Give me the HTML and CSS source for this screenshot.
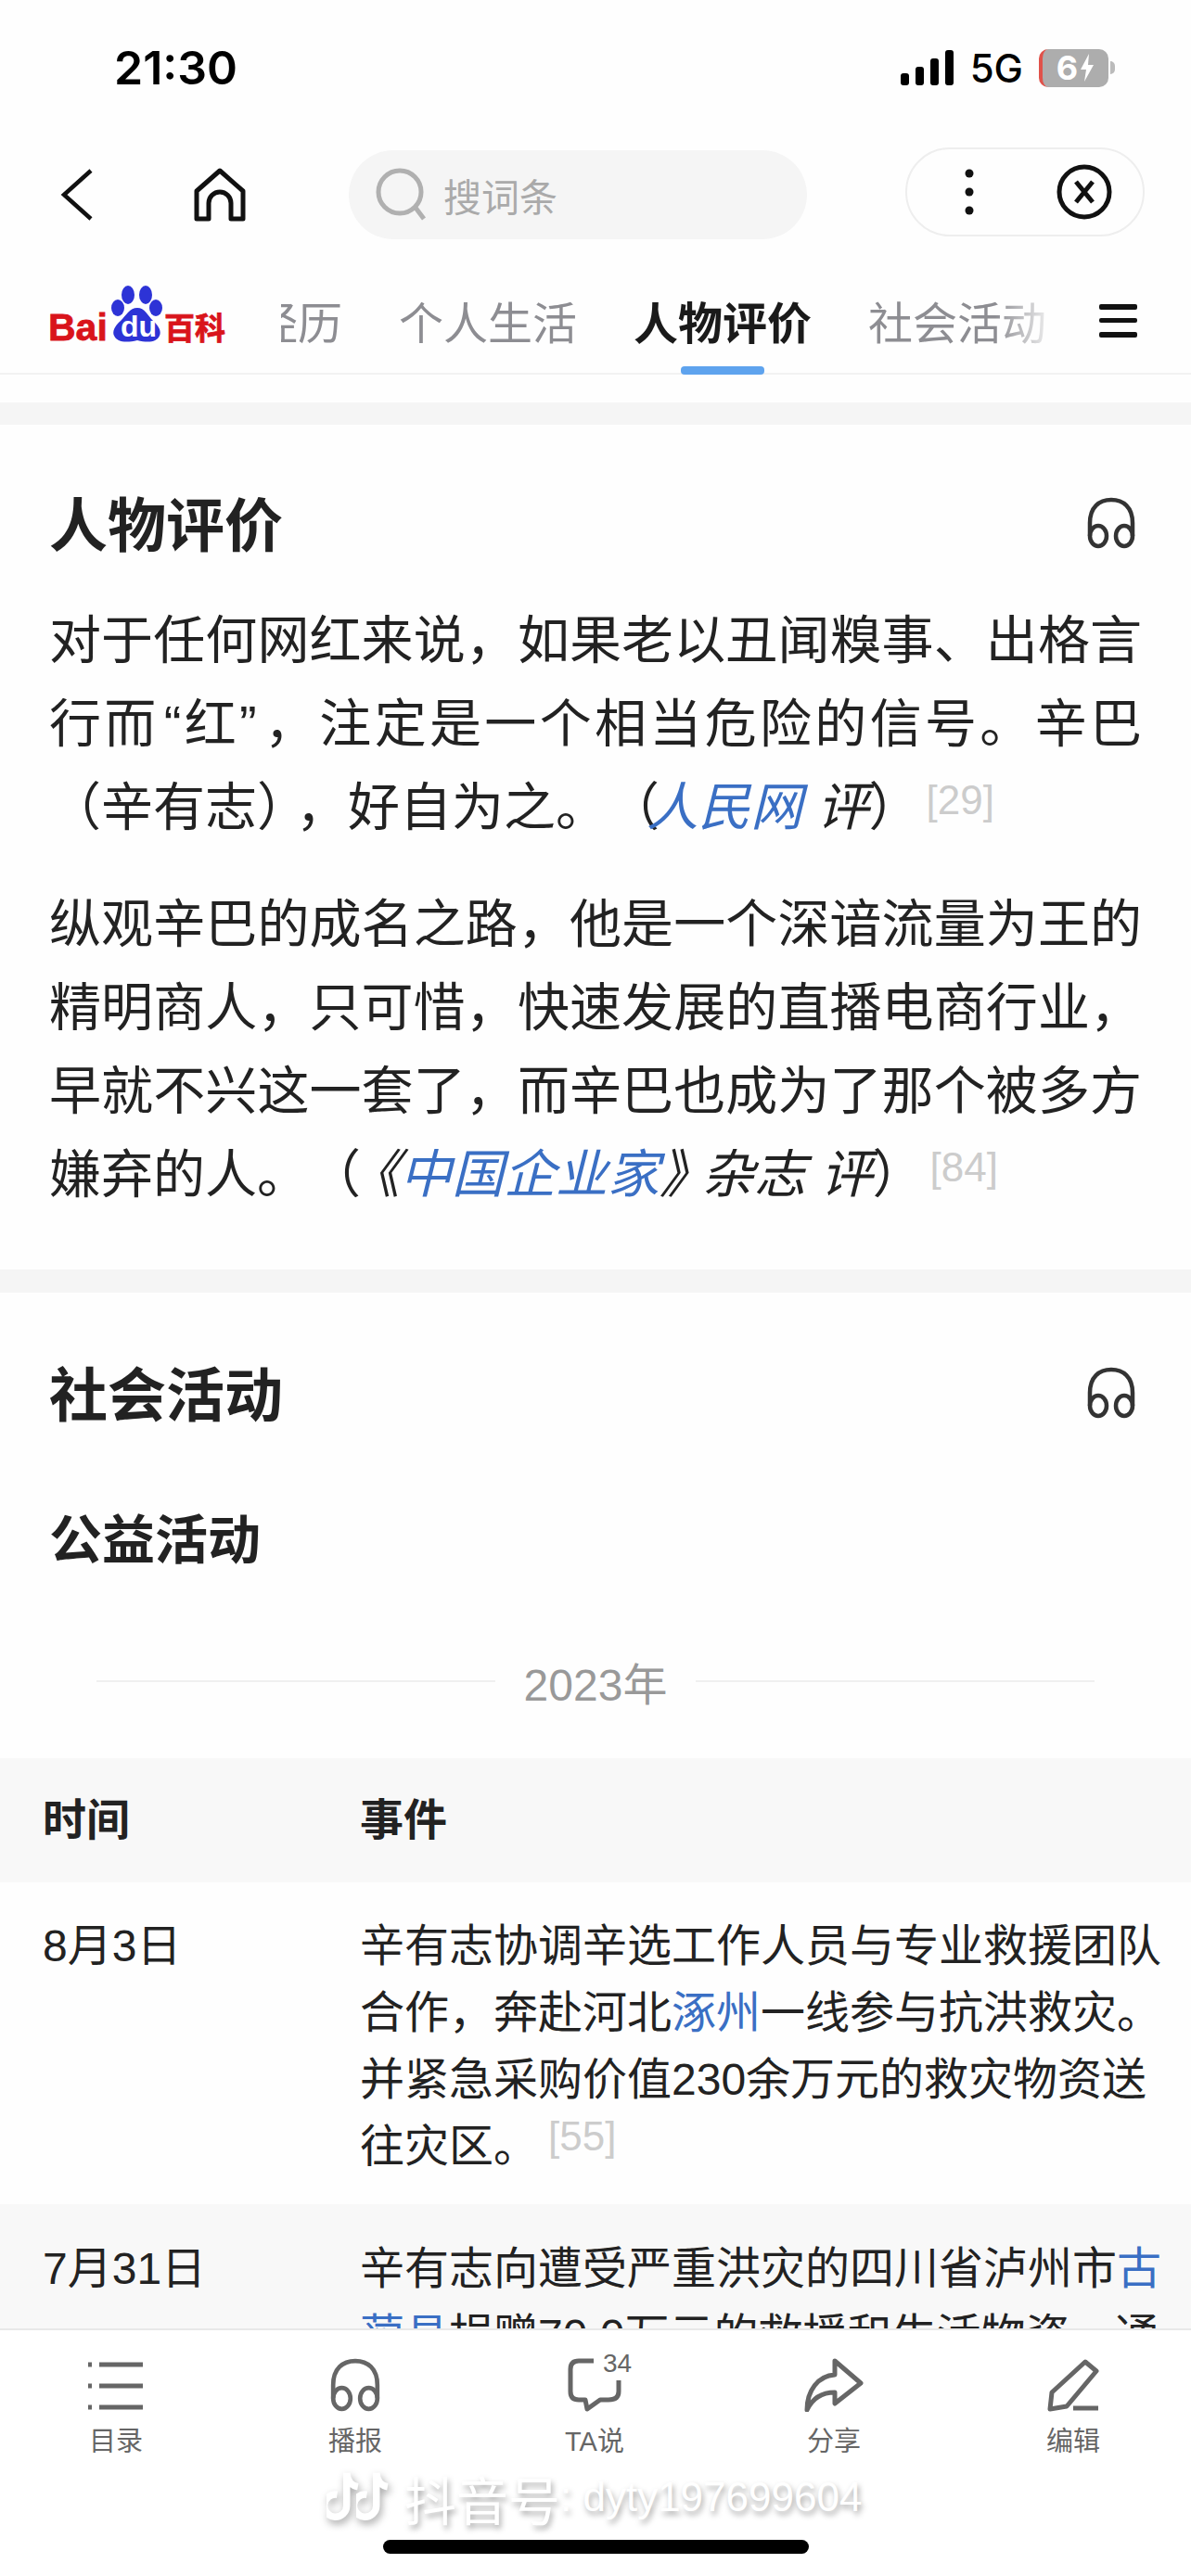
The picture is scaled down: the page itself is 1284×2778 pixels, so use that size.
FILE: index.html
```html
<!DOCTYPE html>
<html lang="zh-CN">
<head>
    <meta charset="UTF-8">
    <meta name="viewport" content="width=device-width, initial-scale=1.0">
    <title>人物评价</title>
    <link rel="stylesheet" href="styles.css">
</head>
<body>
    <svg class="sprites" width="0" height="0">
        <symbol id="headphones" viewBox="0 0 56 56">
            <path d="M5 42 V28 C5 11 15 3 28 3 S51 11 51 28 V42" fill="none" stroke="currentColor" stroke-width="4.5"/>
            <ellipse cx="14" cy="42" rx="9" ry="11" fill="none" stroke="currentColor" stroke-width="4.5"/>
            <ellipse cx="42" cy="42" rx="9" ry="11" fill="none" stroke="currentColor" stroke-width="4.5"/>
        </symbol>
        <symbol id="note" viewBox="0 0 36 60">
            <path d="M22 2 V40 A13 13 0 1 1 11 27 M22 2 C23 12 29 17 35 18" fill="none" stroke="#fff" stroke-width="8"/>
        </symbol>
    </svg>

    <div class="page">
        <div class="status-bar">
            <span class="time">21:30</span>
            <div class="status-right">
                <svg class="signal" width="58" height="38" viewBox="0 0 58 38">
                    <rect x="0" y="25" width="9" height="13" rx="3"/>
                    <rect x="16" y="18" width="9" height="20" rx="3"/>
                    <rect x="32" y="9" width="9" height="29" rx="3"/>
                    <rect x="48" y="0" width="9" height="38" rx="3"/>
                </svg>
                <span class="net">5G</span>
                <div class="battery">
                    <span>6</span>
                    <svg width="16" height="30" viewBox="0 0 16 30"><path d="M10 0 L1 17 H7 L5 30 L15 12 H9 Z" fill="#fff"/></svg>
                </div>
                <span class="battery-nub"></span>
            </div>
        </div>

        <div class="nav-bar">
            <button class="nav-btn back-btn">
                <svg width="36" height="58" viewBox="0 0 36 58"><path d="M33 3 L4 29 L33 55" fill="none" stroke="#111" stroke-width="4.5"/></svg>
            </button>
            <button class="nav-btn home-btn">
                <svg width="56" height="58" viewBox="0 0 56 58"><path d="M3 55 V25 L28 3 L53 25 V55 H40 V38 A12 12 0 0 0 16 38 V55 Z" fill="none" stroke="#111" stroke-width="5" stroke-linejoin="round"/></svg>
            </button>
            <div class="search-box">
                <svg width="58" height="58" viewBox="0 0 58 58"><circle cx="26" cy="26" r="23" fill="none" stroke="#b0b0b0" stroke-width="5"/><path d="M43 43 L52 55" stroke="#b0b0b0" stroke-width="5"/></svg>
                <span>搜词条</span>
            </div>
            <div class="capsule">
                <svg width="12" height="52" viewBox="0 0 12 52" fill="#111"><circle cx="6" cy="6" r="4.5"/><circle cx="6" cy="26" r="4.5"/><circle cx="6" cy="46" r="4.5"/></svg>
                <svg width="62" height="62" viewBox="0 0 62 62"><circle cx="31" cy="31" r="27" fill="none" stroke="#111" stroke-width="5"/><path d="M22 20 L40 42 M40 20 L22 42" stroke="#111" stroke-width="5"/></svg>
            </div>
        </div>

        <div class="tab-bar">
            <svg class="logo" width="194" height="68" viewBox="52 305 194 68">
                <ellipse cx="138" cy="318" rx="7" ry="10" fill="#2d33d6"/>
                <ellipse cx="157" cy="318" rx="7" ry="10" fill="#2d33d6"/>
                <ellipse cx="127" cy="332" rx="7" ry="9" fill="#2d33d6"/>
                <ellipse cx="168" cy="332" rx="7" ry="9" fill="#2d33d6"/>
                <path d="M148 332 C156 332 159 340 165 346 C172 352 174 358 172 362 C169 369 160 370 148 367 C136 370 126 369 123 362 C121 358 123 352 130 346 C136 340 140 332 148 332 Z" fill="#2d33d6"/>
                <text x="52" y="367" class="logo-red logo-bai">Bai</text>
                <text x="130" y="363" class="logo-du">du</text>
                <text x="177" y="366" class="logo-red logo-ke">百科</text>
            </svg>
            <div class="tab-scroll">
                <div class="tab-list">
                    <span class="tab">经历</span>
                    <span class="tab">个人生活</span>
                    <span class="tab active">人物评价</span>
                    <span class="tab">社会活动</span>
                    <span class="tab">参考资料</span>
                </div>
            </div>
            <svg class="tab-menu" width="42" height="36" viewBox="0 0 42 36" fill="#111"><rect x="0" y="0" width="41" height="6" rx="2"/><rect x="0" y="15" width="41" height="5" rx="2"/><rect x="0" y="30" width="41" height="6" rx="2"/></svg>
        </div>

        <div class="content">
            <div class="band band-first"></div>
            <section class="section">
                <div class="section-head">
                    <h2>人物评价</h2>
                    <svg class="listen" width="56" height="56"><use href="#headphones"/></svg>
                </div>
                <p class="para">对于任何网红来说，如果老以丑闻糗事、出格言行而<span class="quote">“红”</span>，注定是一个相当危险的信号。辛巴（辛有志<span class="tight">）</span>，好自为之。<span class="tight">（</span><em><a>人民网</a> 评</em>）<sup class="ref">[29]</sup></p>
                <p class="para">纵观辛巴的成名之路，他是一个深谙流量为王的精明商人，只可惜，快速发展的直播电商行业，早就不兴这一套了，而辛巴也成为了那个被多方嫌弃的人。<span class="tight">（</span><em>《<a>中国企业家</a><span class="tight-close">》</span>杂志 评</em>）<sup class="ref">[84]</sup></p>
            </section>
            <div class="band"></div>
            <section class="section section-table">
                <div class="section-head">
                    <h2>社会活动</h2>
                    <svg class="listen" width="56" height="56"><use href="#headphones"/></svg>
                </div>
                <h3 class="sub-title">公益活动</h3>
                <div class="year-line"><span>2023年</span></div>
                <div class="event-table">
                    <div class="event-row event-head">
                        <div>时间</div>
                        <div>事件</div>
                    </div>
                    <div class="event-row">
                        <div>8月3日</div>
                        <div>辛有志协调辛选工作人员与专业救援团队合作，奔赴河北<a>涿州</a>一线参与抗洪救灾。并紧急采购价值230余万元的救灾物资送往灾区。<sup class="ref">[55]</sup></div>
                    </div>
                    <div class="event-row alt">
                        <div>7月31日</div>
                        <div>辛有志向遭受严重洪灾的四川省泸州市<a>古蔺县</a>捐赠70.0万元的救援和生活物资，通</div>
                    </div>
                </div>
            </section>
        </div>

        <div class="bottom-bar">
            <div class="tool">
                <svg width="60" height="58" viewBox="0 0 60 58" stroke="#666" stroke-width="5"><path d="M0 7 H4 M12 7 H59 M0 30 H4 M12 30 H59 M0 53 H4 M12 53 H59"/></svg>
                <span>目录</span>
            </div>
            <div class="tool">
                <svg class="tool-listen" width="60" height="58"><use href="#headphones"/></svg>
                <span>播报</span>
            </div>
            <div class="tool">
                <div class="tool-icon">
                    <svg width="58" height="58" viewBox="0 0 58 58"><path d="M28 3 H12 Q3 3 3 12 V36 Q3 45 12 45 H19 L21 55 L35 45 H44 Q55 45 55 36 V24" fill="none" stroke="#666" stroke-width="5" stroke-linejoin="round"/></svg>
                    <span class="count">34</span>
                </div>
                <span>TA说</span>
            </div>
            <div class="tool">
                <svg width="64" height="58" viewBox="0 0 64 58"><path d="M33 3 L61 27 L33 49 V37 C19 37 9 43 3 56 C3 35 15 19 33 18 Z" fill="none" stroke="#666" stroke-width="5" stroke-linejoin="round"/></svg>
                <span>分享</span>
            </div>
            <div class="tool">
                <svg width="56" height="58" viewBox="0 0 56 58"><path d="M41 4 L53 14 L21 52 L3 55 L5 37 Z" fill="none" stroke="#666" stroke-width="5" stroke-linejoin="round"/><path d="M28 54 H55" stroke="#666" stroke-width="5"/></svg>
                <span>编辑</span>
            </div>
        </div>

        <div class="watermark">
            <svg class="mark-note" width="36" height="56"><use href="#note"/></svg>
            <svg class="mark-note mark-second" width="36" height="56"><use href="#note"/></svg>
            <span class="mark-name">抖音号</span>
            <span>: dyty197699604</span>
        </div>
        <div class="home-bar"></div>
    </div>
</body>
</html>
```

FILE: styles.css
```css
* {
    margin: 0;
    padding: 0;
    box-sizing: border-box;
}

body {
    width: 1284px;
    height: 2778px;
    overflow: hidden;
    background: #fefefe;
    font-family: 'Liberation Sans', 'Noto Sans CJK SC', sans-serif;
    color: #222;
    text-spacing-trim: space-all;
}

a {
    color: #3a6fc4;
}

.sprites {
    position: absolute;
}

.page {
    position: relative;
    height: 2778px;
    display: flex;
    flex-direction: column;
}

/* status bar */
.status-bar {
    height: 146px;
    flex-shrink: 0;
    display: flex;
    align-items: center;
    justify-content: space-between;
    padding: 0 82px 0 123px;
    color: #000;
}

.time {
    font-family: 'Inter', sans-serif;
    font-size: 50px;
    font-weight: 600;
}

.status-right {
    display: flex;
    align-items: center;
}

.signal {
    fill: #000;
    margin-right: 17px;
}

.net {
    font-family: 'Inter', sans-serif;
    font-size: 42px;
    font-weight: 500;
    margin-right: 17px;
}

.battery {
    width: 75px;
    height: 41px;
    background: #adadad;
    border-left: 4px solid #e0524a;
    border-radius: 10px;
    display: flex;
    align-items: center;
    justify-content: center;
    gap: 2px;
    color: #fff;
    font-family: 'Inter', sans-serif;
    font-size: 36px;
    font-weight: 700;
}

.battery-nub {
    width: 5px;
    height: 14px;
    margin-left: 2px;
    background: #bbb;
    border-radius: 0 5px 5px 0;
}

/* nav */
.nav-bar {
    height: 128px;
    flex-shrink: 0;
    display: flex;
    align-items: center;
    padding-left: 65px;
}

.nav-btn {
    background: none;
    border: none;
    display: flex;
}

.back-btn {
    margin-right: 108px;
}

.home-btn {
    margin-right: 111px;
}

.search-box {
    width: 494px;
    height: 96px;
    background: #f5f5f5;
    border-radius: 48px;
    display: flex;
    align-items: center;
    gap: 15px;
    padding-left: 29px;
    color: #aaa;
    font-size: 41px;
}

.capsule {
    width: 258px;
    height: 96px;
    margin-left: 106px;
    margin-top: -6px;
    border: 2px solid #eee;
    border-radius: 48px;
    display: flex;
    align-items: center;
    justify-content: space-between;
    padding: 0 32px 0 61px;
}

/* tabs */
.tab-bar {
    height: 130px;
    flex-shrink: 0;
    display: flex;
    align-items: flex-start;
    border-bottom: 2px solid #f2f2f2;
}

.logo {
    margin: 31px 0 0 52px;
    flex-shrink: 0;
}

.logo-red {
    fill: #d9141b;
    stroke: #d9141b;
    stroke-width: 0.8px;
    font-weight: 700;
}

.logo-bai {
    font-size: 41px;
}

.logo-ke {
    font-size: 33px;
}

.logo-du {
    fill: #fff;
    font-size: 32px;
    font-weight: 700;
}

.tab-scroll {
    width: 837px;
    height: 130px;
    margin-left: 57px;
    overflow: hidden;
    -webkit-mask-image: linear-gradient(90deg, #000 92%, transparent);
    mask-image: linear-gradient(90deg, #000 92%, transparent);
}

.tab-list {
    display: flex;
    gap: 61px;
    margin-left: -30px;
    padding-top: 48px;
}

.tab {
    position: relative;
    height: 82px;
    flex-shrink: 0;
    font-size: 48px;
    line-height: 56px;
    color: #8d8d92;
}

.tab.active {
    color: #1a1a1a;
    font-weight: 700;
}

.tab.active::after {
    content: '';
    position: absolute;
    left: 51px;
    bottom: 0;
    width: 90px;
    height: 9px;
    background: #5ea3ee;
    border-radius: 4px;
}

.tab-menu {
    margin: 54px 0 0 45px;
}

/* content */
.content {
    flex: 1;
    overflow: hidden;
}

.band {
    height: 25px;
    background: #f5f5f5;
}

.band-first {
    margin-top: 30px;
    height: 24px;
}

.section {
    padding: 66px 53px 57px;
}

.section-table {
    padding: 68px 0 0;
}

.section-head {
    display: flex;
    align-items: center;
    justify-content: space-between;
    height: 80px;
}

.section-table .section-head {
    padding: 0 53px;
}

.section-head h2 {
    margin-top: -6px;
    font-size: 63px;
    font-weight: 700;
}

.listen {
    color: #333;
    margin-right: 5px;
}

.para {
    font-size: 56px;
    line-height: 90px;
    text-align: justify;
    margin-top: 36px;
}

.section-head + .para {
    margin-top: 42px;
}

.para em {
    font-style: italic;
}

.quote {
    padding: 0 5px;
}

/* the reference sets these brackets narrower than a full em */
.tight {
    margin-right: -14px;
}

.tight-close {
    margin-right: -10px;
}

.ref {
    font-size: 44px;
    color: #ccc;
    margin-left: 11px;
    line-height: 0;
    vertical-align: 12px;
}

.para .ref {
    margin-left: 6px;
}

.sub-title {
    margin: 84px 0 0 53px;
    font-size: 57px;
    line-height: 70px;
    font-weight: 700;
}

.year-line {
    margin: 87px 104px 0;
    height: 60px;
    display: flex;
    align-items: center;
    gap: 31px;
    color: #999;
    font-size: 48px;
}

.year-line::before,
.year-line::after {
    content: '';
    flex: 1;
    height: 2px;
    background: #f0f0f0;
}

/* table */
.event-table {
    margin-top: 53px;
}

.event-row {
    display: grid;
    grid-template-columns: 342px 866px;
    padding: 33px 0 26px 46px;
    font-size: 48px;
    line-height: 72px;
}

.event-head {
    height: 134px;
    padding: 0 0 0 46px;
    align-items: center;
    background: #f8f8f8;
    font-weight: 700;
    font-size: 47px;
}

.event-row.alt {
    padding-top: 34px;
    background: #f8f8f8;
}

/* bottom */
.bottom-bar {
    height: 267px;
    flex-shrink: 0;
    display: grid;
    grid-template-columns: repeat(5, 258px);
    margin-left: -4px;
    align-items: start;
    background: #fff;
    border-top: 2px solid #e8e8e8;
    padding-top: 30px;
}

.tool {
    display: flex;
    flex-direction: column;
    align-items: center;
    gap: 13px;
    color: #666;
    font-size: 29px;
    line-height: 38px;
}

.tool-listen {
    color: #666;
}

.tool-icon {
    position: relative;
    display: flex;
}

.count {
    position: absolute;
    left: 36px;
    top: -9px;
    font-size: 28px;
    line-height: 30px;
    padding: 0 2px;
    background: #fff;
}

.watermark {
    position: absolute;
    left: 352px;
    top: 2663px;
    display: flex;
    align-items: center;
    height: 60px;
    color: #fff;
    font-size: 44px;
    white-space: nowrap;
    text-shadow: 2px 4px 6px rgba(0, 0, 0, 0.35);
}

.mark-note {
    filter: drop-shadow(2px 4px 4px rgba(0, 0, 0, 0.35));
}

.mark-second {
    margin-left: -4px;
    margin-right: 16px;
}

.mark-name {
    font-size: 56px;
}

.home-bar {
    position: absolute;
    left: 413px;
    top: 2739px;
    width: 459px;
    height: 15px;
    background: #000;
    border-radius: 8px;
}
```
